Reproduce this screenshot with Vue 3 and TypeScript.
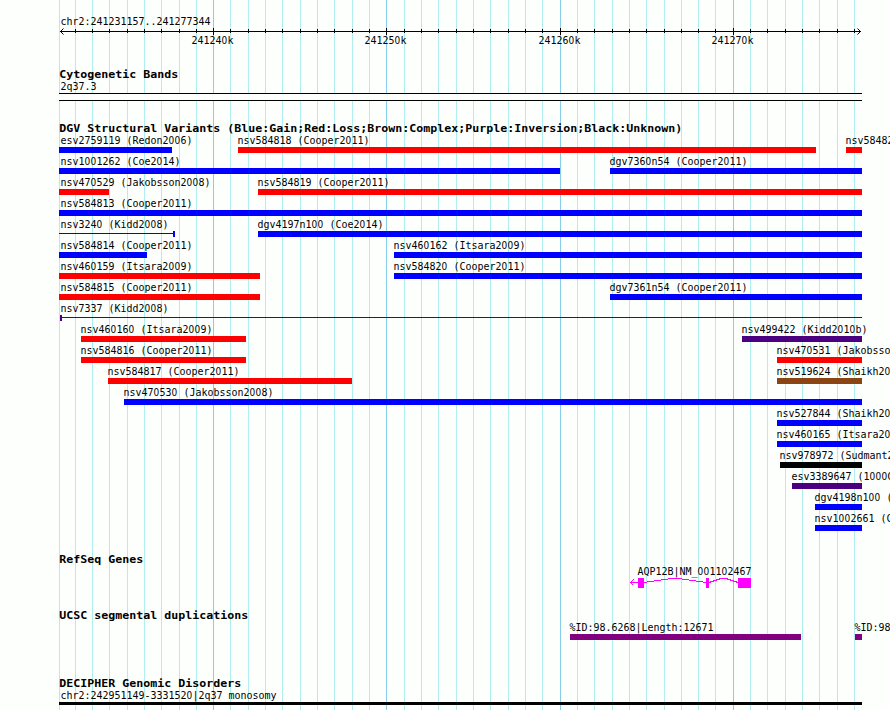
<script setup lang="ts">
type Kind = 'bar' | 'rangeRight' | 'rangeLeft' | 'band' | 'gene' | 'thin'

interface Feature {
  label: string
  start: number
  end: number
  color: string
  kind: Kind
}

interface Track {
  id: string
  title: string
  rowHeight: number
  rows: Feature[][]
}

const LEFT = 59
const RIGHT = 862
const BLUE = '#0000ff'
const RED = '#ff0000'
const INDIGO = '#4b0082'
const BROWN = '#8b4513'
const BLACK = '#000000'
const PURPLE = '#800080'
const MAGENTA = '#ff00ff'

const gridLines: number[] = [
  59, 75, 92, 109, 127, 144, 161, 179, 196, 213, 230, 248, 265, 282, 300, 317,
  334, 352, 369, 386, 404, 421, 438, 456, 473, 490, 508, 525, 542, 560, 577,
  594, 612, 629, 646, 664, 681, 698, 715, 733, 750, 767, 785, 802, 819, 837, 854,
]
const majors = [
  { x: 213, label: '241240k' },
  { x: 386, label: '241250k' },
  { x: 560, label: '241260k' },
  { x: 733, label: '241270k' },
]
const isMajor = (x: number): boolean => majors.some((m) => m.x === x)

const f = (label: string, start: number, end: number, color: string, kind: Kind = 'bar'): Feature => ({
  label,
  start,
  end,
  color,
  kind,
})

const tracks: Track[] = [
  {
    id: 'cytobands',
    title: 'Cytogenetic Bands',
    rowHeight: 21,
    rows: [[f('2q37.3', LEFT, RIGHT, BLACK, 'band')]],
  },
  {
    id: 'variants',
    title: 'DGV Structural Variants (Blue:Gain;Red:Loss;Brown:Complex;Purple:Inversion;Black:Unknown)',
    rowHeight: 21,
    rows: [
      [
        f('esv2759119 (Redon2006)', LEFT, 172, BLUE),
        f('nsv584818 (Cooper2011)', 238, 816, RED),
        f('nsv584821 (Cooper2011)', 846, RIGHT, RED),
      ],
      [f('nsv1001262 (Coe2014)', LEFT, 560, BLUE), f('dgv7360n54 (Cooper2011)', 610, RIGHT, BLUE)],
      [f('nsv470529 (Jakobsson2008)', LEFT, 109, RED), f('nsv584819 (Cooper2011)', 258, RIGHT, RED)],
      [f('nsv584813 (Cooper2011)', LEFT, RIGHT, BLUE)],
      [f('nsv3240 (Kidd2008)', LEFT, 175, BLUE, 'rangeRight'), f('dgv4197n100 (Coe2014)', 258, RIGHT, BLUE)],
      [f('nsv584814 (Cooper2011)', LEFT, 147, BLUE), f('nsv460162 (Itsara2009)', 394, RIGHT, BLUE)],
      [f('nsv460159 (Itsara2009)', LEFT, 260, RED), f('nsv584820 (Cooper2011)', 394, RIGHT, BLUE)],
      [f('nsv584815 (Cooper2011)', LEFT, 260, RED), f('dgv7361n54 (Cooper2011)', 610, RIGHT, BLUE)],
      [f('nsv7337 (Kidd2008)', 60, RIGHT, INDIGO, 'rangeLeft')],
      [f('nsv460160 (Itsara2009)', 81, 246, RED), f('nsv499422 (Kidd2010b)', 742, RIGHT, INDIGO)],
      [f('nsv584816 (Cooper2011)', 81, 246, RED), f('nsv470531 (Jakobsson2008)', 777, RIGHT, RED)],
      [f('nsv584817 (Cooper2011)', 108, 352, RED), f('nsv519624 (Shaikh2009)', 777, RIGHT, BROWN)],
      [f('nsv470530 (Jakobsson2008)', 124, RIGHT, BLUE)],
      [f('nsv527844 (Shaikh2009)', 777, RIGHT, BLUE)],
      [f('nsv460165 (Itsara2009)', 777, RIGHT, BLUE)],
      [f('nsv978972 (Sudmant2013)', 780, RIGHT, BLACK)],
      [f('esv3389647 (1000G)', 792, RIGHT, INDIGO)],
      [f('dgv4198n100 (Coe2014)', 815, RIGHT, BLUE)],
      [f('nsv1002661 (Coe2014)', 815, RIGHT, BLUE)],
    ],
  },
  {
    id: 'genes',
    title: 'RefSeq Genes',
    rowHeight: 24,
    rows: [[f('AQP12B|NM_001102467', 638, 751, MAGENTA, 'gene')]],
  },
  {
    id: 'segdups',
    title: 'UCSC segmental duplications',
    rowHeight: 21,
    rows: [[f('%ID:98.6268|Length:12671', 570, 801, PURPLE), f('%ID:98.6', 855, RIGHT, PURPLE)]],
  },
  {
    id: 'decipher',
    title: 'DECIPHER Genomic Disorders',
    rowHeight: 21,
    rows: [[f('chr2:242951149-3331520|2q37 monosomy', LEFT, RIGHT, BLACK, 'thin')]],
  },
]

const labelX = (item: Feature): number => (item.start <= 60 ? 60.4 : item.start - 0.4)
const pieces = (text: string): string[] => text.split(/(0)/).filter((p) => p !== '')
</script>

<template>
  <main class="browser">
    <svg class="grid" width="890" height="710" shape-rendering="crispEdges">
      <rect
        v-for="x in gridLines"
        :key="x"
        :x="x"
        y="0"
        width="1"
        height="710"
        :class="isMajor(x) ? 'major' : 'minor'"
      />
    </svg>

    <svg class="strip ruler" width="890" height="66">
      <text class="label" x="60.4" y="25" textLength="150" lengthAdjust="spacingAndGlyphs">chr2:241231157..241277344</text>
      <g shape-rendering="crispEdges">
        <rect x="60" y="31" width="801" height="1" />
        <rect
          v-for="x in gridLines.slice(1)"
          :key="x"
          :x="x"
          :y="isMajor(x) ? 28 : 29"
          width="1"
          :height="isMajor(x) ? 7 : 4"
        />
      </g>
      <path class="arrow" d="M63.5 28.5l-3 3l3 3M857.5 28.5l3 3l-3 3" />
      <text
        v-for="m in majors"
        :key="m.x"
        class="label"
        :x="m.x - 21.6"
        y="44"
        textLength="42"
        lengthAdjust="spacingAndGlyphs"
      ><tspan v-for="(p, i) in pieces(m.label)" :key="i" :class="{ zero: p === '0' }">{{ p }}</tspan></text>
    </svg>

    <section v-for="track in tracks" :key="track.id" class="track" :class="track.id">
      <svg class="strip" width="890" height="14">
        <text class="title" x="59.3" y="12" :textLength="track.title.length * 7" lengthAdjust="spacingAndGlyphs">{{ track.title }}</text>
      </svg>
      <svg v-for="(row, r) in track.rows" :key="r" class="strip" width="890" :height="track.rowHeight">
        <g v-for="item in row" :key="item.label" :fill="item.color">
          <text
            class="label"
            :x="labelX(item)"
            y="10"
            :textLength="item.label.length * 6"
            lengthAdjust="spacingAndGlyphs"
          ><tspan v-for="(p, i) in pieces(item.label)" :key="i" :class="{ zero: p === '0' }">{{ p }}</tspan></text>
          <g v-if="item.kind === 'gene'">
            <path
              class="intron"
              d="M630.5 17.5H638M633.5 14.5l-3 3l3 3M644 17.5L671 13.5H679L706 17.5M709 17.5L721 13.5H726L738 17.5"
            />
            <rect x="638" y="13" width="6" height="10" />
            <rect x="706" y="13" width="3" height="10" />
            <rect x="738" y="13" width="13" height="10" />
          </g>
          <g v-else-if="item.kind === 'band'">
            <rect class="band" :x="item.start" y="13" :width="item.end - item.start" height="8" />
            <rect :x="item.start" y="13" :width="item.end - item.start" height="1" />
            <rect :x="item.start" y="20" :width="item.end - item.start" height="1" />
          </g>
          <g v-else-if="item.kind === 'rangeRight' || item.kind === 'rangeLeft'">
            <rect :x="item.start" :y="15" :width="item.end - item.start" height="1" />
            <rect :x="item.kind === 'rangeLeft' ? item.start : item.end - 2" y="13" width="2" height="6" />
          </g>
          <rect
            v-else
            :x="item.start"
            y="13"
            :width="item.end - item.start"
            :height="item.kind === 'thin' ? 3 : 6"
          />
        </g>
      </svg>
    </section>
  </main>
</template>

<style>
body {
  background: #fdfffd;
}
</style>

<style scoped>
.browser {
  position: relative;
  width: 890px;
  height: 710px;
  overflow: hidden;
  background: #fdfffd;
}
.grid {
  position: absolute;
  inset: 0;
}
.minor {
  fill: #afeeee;
}
.major {
  fill: #87ceeb;
}
.strip {
  position: relative;
  display: block;
  overflow: hidden;
}
.track .strip:first-child {
  overflow: visible;
}
.label,
.title {
  font-family: 'DejaVu Sans Mono', monospace;
  font-size: 11px;
  fill: #000;
  white-space: pre;
}
.title {
  font-weight: 700;
}
.zero {
  font-family: 'DejaVu Sans Condensed', 'DejaVu Sans', sans-serif;
  font-stretch: condensed;
  letter-spacing: 0.32px;
}
.arrow {
  fill: none;
  stroke: #000;
}
.intron {
  fill: none;
  stroke: #ff00ff;
  shape-rendering: crispEdges;
}
.band {
  fill: #fdfffd;
}
.variants {
  margin-top: 19px;
}
.genes,
.segdups {
  margin-top: 18px;
}
.decipher {
  margin-top: 33px;
}
</style>
